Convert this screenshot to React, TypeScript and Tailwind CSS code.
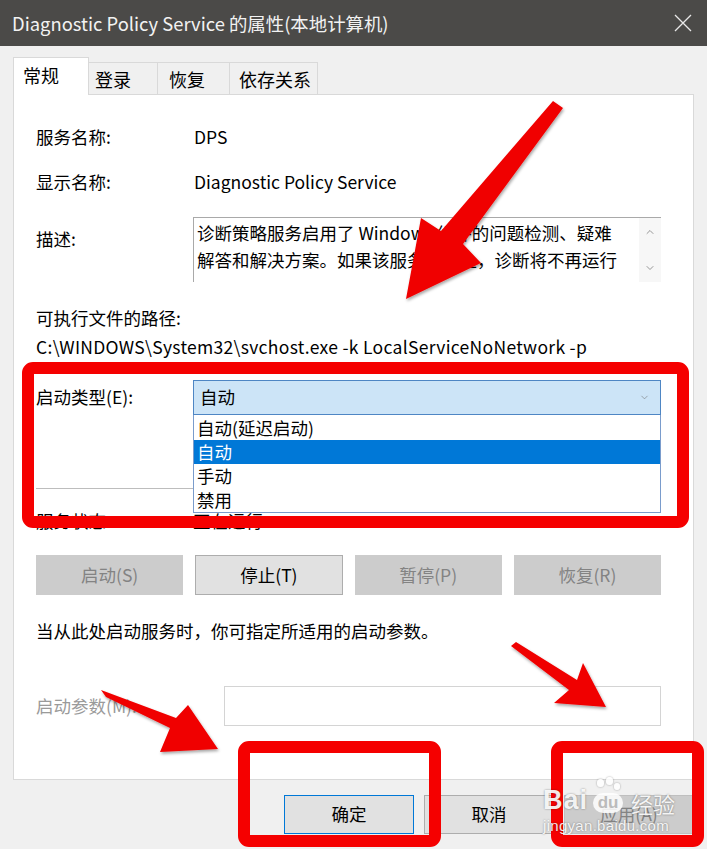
import { ChevronDown, ChevronUp } from 'lucide-react'

const TABS = [
  { label: '常规', w: 'w-[76px]', pl: 'pl-[9px]', active: true },
  { label: '登录', w: 'w-[69px]', pl: 'pl-[6px]', active: false },
  { label: '恢复', w: 'w-[72px]', pl: 'pl-[11px]', active: false },
  { label: '依存关系', w: 'w-[88px]', pl: 'pl-[9px]', active: false },
]

const OPTIONS = ['自动(延迟启动)', '自动', '手动', '禁用']

function Annotations() {
  // 红色标注：箭头 + 方框
  return (
    <svg className="absolute inset-0 pointer-events-none" width="707" height="849" viewBox="0 0 707 849">
      <defs>
        <filter id="sh" x="-20%" y="-20%" width="140%" height="140%">
          <feDropShadow dx="1" dy="2" stdDeviation="1.5" floodColor="#000" floodOpacity="0.35" />
        </filter>
      </defs>
      <g fill="#f00000" filter="url(#sh)">
        <polygon points="553,101 563,108 463,244 481,263 406,299 421,218 441,231" />
        <polygon points="101,690 106,697 170,728 160,752 218,749 188,705 176,718" />
        <polygon points="511,646 516,642 577,680 583,663 606,707 554,703 569,690" />
      </g>
      <g fill="none" stroke="#f50000" strokeWidth="12">
        <rect x="28" y="368" width="655" height="154" rx="5" />
        <rect x="244" y="747" width="191" height="94" rx="5" />
        <rect x="557" y="747" width="141" height="94" rx="5" />
      </g>
    </svg>
  )
}

function Watermark() {
  return (
    <div className="absolute left-[543px] top-[772px] w-[150px] whitespace-nowrap text-white/90 [text-shadow:0_0_2px_rgba(0,0,0,0.45)] pointer-events-none">
      <div className="flex items-end h-[42px]">
        <span className="text-[27px] font-bold leading-none font-['Liberation_Sans',sans-serif] tracking-[1px]">Bai</span>
        <span className="relative ml-[3px] mb-[1px] w-[34px] h-[34px] shrink-0 flex flex-col items-center justify-end">
          <span className="absolute top-0 left-[6px] w-[7px] h-[8px] rounded-full bg-white/85 shadow-[0_0_2px_rgba(0,0,0,0.4)]" />
          <span className="absolute top-[-2px] left-[15px] w-[7px] h-[8px] rounded-full bg-white/85 shadow-[0_0_2px_rgba(0,0,0,0.4)]" />
          <span className="absolute top-[4px] left-[23px] w-[6px] h-[7px] rounded-full bg-white/85 shadow-[0_0_2px_rgba(0,0,0,0.4)]" />
          <span className="w-[30px] h-[20px] rounded-[10px] bg-white/85 text-[#bbbbbb] text-[17px] font-bold leading-[19px] text-center font-['Liberation_Sans',sans-serif] [text-shadow:none]">du</span>
        </span>
        <span className="ml-[6px] text-[22px] leading-none">经验</span>
      </div>
      <div className="text-[15px] leading-[18px] mt-[3px] font-['Liberation_Sans',sans-serif] tracking-[0.3px]">jingyan.baidu.com</div>
    </div>
  )
}

export default function App() {
  return (
    <div className="relative w-[707px] h-[849px] overflow-hidden bg-[#f0f0f0] text-[#000] font-['Noto_Sans_CJK_SC','Noto_Sans',sans-serif]">
      {/* 标题栏 */}
      <div className="h-[46px] bg-[#4b4a48] flex items-center justify-between pl-[12px] pr-[14px]">
        <span className="text-[18.4px] text-[#f2f2f2] leading-none">Diagnostic Policy Service 的属性(本地计算机)</span>
        <svg width="20" height="20" viewBox="0 0 20 20">
          <path d="M2 2 L18 18 M18 2 L2 18" stroke="#e8e8e8" strokeWidth="1.3" />
        </svg>
      </div>

      <div className="px-[13px] pt-[11px]">
        {/* 标签页 */}
        <div className="flex items-end h-[37px]">
          {TABS.map(t => (
            <div
              key={t.label}
              className={[
                'flex items-center text-[18px] leading-none border border-b-0',
                t.w,
                t.pl,
                t.active
                  ? 'h-[38px] -mb-px bg-white border-[#d9d9d9] relative z-10 pb-[4px]'
                  : 'h-[32px] bg-[#f0f0f0] border-[#d9d9d9] border-l-0 first:border-l',
              ].join(' ')}
            >
              {t.label}
            </div>
          ))}
        </div>

        {/* 面板 */}
        <div className="bg-white border border-[#d9d9d9] h-[686px] pl-[22px] pr-[32px] pt-[30px] text-[17.5px]">
          <div className="flex items-center h-[24px]">
            <span className="w-[158px]">服务名称:</span>
            <span>DPS</span>
          </div>
          <div className="flex items-center h-[24px] mt-[21px]">
            <span className="w-[158px]">显示名称:</span>
            <span>Diagnostic Policy Service</span>
          </div>
          <div className="flex items-start mt-[23px]">
            <span className="w-[157px] mt-[10px] leading-[24px]">描述:</span>
            <div className="flex-1 h-[65px] flex border-t border-l border-[#a9a9a9] bg-white">
              <div className="flex-1 pl-[3px] pt-[1px] leading-[27px] text-[17.5px]">
                诊断策略服务启用了 Windows 组件的问题检测、疑难<br />
                解答和解决方案。如果该服务被停止，诊断将不再运行
              </div>
              <div className="w-[22px] bg-[#f7f7f7] flex flex-col items-center justify-between py-[8px] text-[#777777]">
                <ChevronUp size={12} strokeWidth={1.5} />
                <ChevronDown size={12} strokeWidth={1.5} />
              </div>
            </div>
          </div>

          <div className="mt-[24px] h-[24px] flex items-center">可执行文件的路径:</div>
          <div className="mt-[5px] h-[24px] flex items-center tracking-[0.3px]">C:\WINDOWS\System32\svchost.exe -k LocalServiceNoNetwork -p</div>

          <div className="flex items-center mt-[21px]">
            <span className="w-[157px]">启动类型(E):</span>
            <div className="relative flex-1">
              <div className="h-[35px] bg-[#cce4f7] border border-[#4e86c4] flex items-center justify-between pl-[6px] pr-[10px]">
                <span>自动</span>
                <ChevronDown size={11} strokeWidth={1.2} className="text-[#6d6d6d]" />
              </div>
              {/* 下拉列表 */}
              <div className="absolute left-0 right-0 top-full z-10 bg-white border border-[#7a9ccc] border-t-0 pt-[1px]">
                {OPTIONS.map((o, i) => (
                  <div
                    key={o}
                    className={`h-[24px] flex items-center pl-[3px] leading-none ${i === 1 ? 'bg-[#0078d7] text-white' : ''}`}
                  >
                    {o}
                  </div>
                ))}
              </div>
            </div>
          </div>

          <div className="h-px bg-[#bdbdbd] mt-[73px]" />

          <div className="flex items-center h-[24px] mt-[20px]">
            <span className="w-[157px]">服务状态:</span>
            <span>正在运行</span>
          </div>

          <div className="grid grid-cols-4 gap-[12px] mt-[22px]">
            {[
              { l: '启动(S)', on: false },
              { l: '停止(T)', on: true },
              { l: '暂停(P)', on: false },
              { l: '恢复(R)', on: false },
            ].map(b => (
              <div
                key={b.l}
                className={`h-[40px] flex items-center justify-center border ${
                  b.on ? 'bg-[#e1e1e1] border-[#adadad] text-black' : 'bg-[#cccccc] border-[#cccccc] text-[#838383]'
                }`}
              >
                {b.l}
              </div>
            ))}
          </div>

          <div className="mt-[24px] h-[24px] flex items-center">当从此处启动服务时，你可指定所适用的启动参数。</div>

          <div className="flex items-center mt-[43px]">
            <span className="w-[188px] text-[#9a9a9a]">启动参数(M):</span>
            <div className="flex-1 h-[40px] border border-[#d4d4d4] bg-white" />
          </div>
        </div>

        {/* 底部按钮 */}
        <div className="flex justify-end gap-[10px] mt-[15px] text-[17.5px]">
          <div className="w-[130px] h-[39px] flex items-center justify-center bg-[#e1e1e1] border border-[#0078d7]">确定</div>
          <div className="w-[130px] h-[39px] flex items-center justify-center bg-[#e1e1e1] border border-[#adadad]">取消</div>
          <div className="w-[130px] h-[39px] flex items-center justify-center bg-[#cccccc] border border-[#bfbfbf] text-[#838383]">应用(A)</div>
        </div>
      </div>

      <Annotations />
      <Watermark />
    </div>
  )
}
